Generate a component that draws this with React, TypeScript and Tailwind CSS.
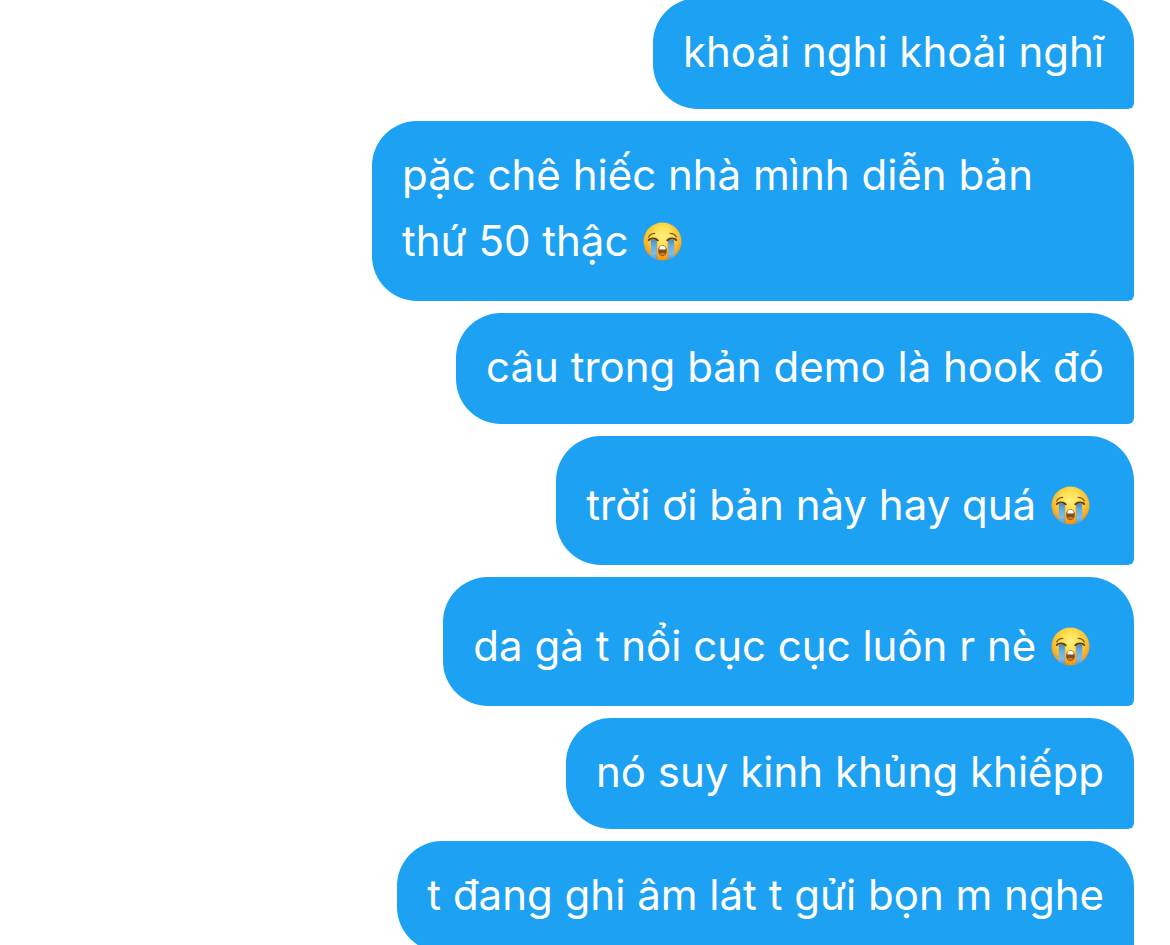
import { clsx } from 'clsx'

type Message = {
  id: number
  text: string
  crying?: boolean
  wide?: boolean
}

const MESSAGES: Message[] = [
  { id: 1, text: 'khoải nghi khoải nghĩ' },
  { id: 2, text: 'pặc chê hiếc nhà mình diễn bản thứ 50 thậc', crying: true, wide: true },
  { id: 3, text: 'câu trong bản demo là hook đó' },
  { id: 4, text: 'trời ơi bản này hay quá', crying: true },
  { id: 5, text: 'da gà t nổi cục cục luôn r nè', crying: true },
  { id: 6, text: 'nó suy kinh khủng khiếpp' },
  { id: 7, text: 't đang ghi âm lát t gửi bọn m nghe' },
]

function CryingFace() {
  return (
    <svg
      role="img"
      aria-label="😭"
      viewBox="0 0 40 40"
      className="ml-[3px] mr-[14px] inline-block h-[39px] w-[39px] align-[-5px]"
    >
      <defs>
        <radialGradient id="face" cx="0.5" cy="0.36" r="0.66">
          <stop offset="0" stopColor="#fff07a" />
          <stop offset="0.4" stopColor="#fddd50" />
          <stop offset="0.7" stopColor="#f9b92f" />
          <stop offset="1" stopColor="#e8890f" />
        </radialGradient>
        <linearGradient id="tear" x1="0" y1="0" x2="0" y2="1">
          <stop offset="0" stopColor="#4a8cc0" />
          <stop offset="0.3" stopColor="#62aee8" />
          <stop offset="0.65" stopColor="#7fbdea" />
          <stop offset="1" stopColor="#3d97e0" />
        </linearGradient>
        <clipPath id="head">
          <circle cx="20" cy="20" r="19.5" />
        </clipPath>
      </defs>
      <circle cx="20" cy="20" r="19.5" fill="url(#face)" />
      <g clipPath="url(#head)">
        <path d="M8 18h6.2v22H8zM25.8 18H32v22h-6.2z" fill="url(#tear)" />
        <path d="M14.4 19v20M25.6 19v20" stroke="#c98a2a" strokeWidth="0.5" />
      </g>
      <path
        d="M5.8 18.6c1.8-2.2 7-2.6 9.4.2M34.2 18.6c-1.8-2.2-7-2.6-9.4.2"
        fill="none"
        stroke="#5a3c14"
        strokeWidth="1.8"
        strokeLinecap="round"
      />
      <path
        d="M5.8 15.4c1.1-1.9 3.6-3.7 6.2-3.7M34.2 15.4c-1.1-1.9-3.6-3.7-6.2-3.7"
        fill="none"
        stroke="#80551b"
        strokeWidth="1.4"
        strokeLinecap="round"
      />
      <path d="M20 23.8c3 0 4.4 2.5 4.4 5.6S22.8 35 20 35s-4.4-2.5-4.4-5.6 1.4-5.6 4.4-5.6z" fill="#8a4a16" />
      <path d="M16.9 26.1c.6-1.4 1.8-1.8 3.1-1.8s2.5.4 3.1 1.8c.5 1.1.1 2.1-.9 2.1h-4.4c-1 0-1.4-1-.9-2.1z" fill="#fff" />
      <path d="M17 33c.8-1.9 5.2-1.9 6 0-.8 1-1.8 1.4-3 1.4s-2.2-.4-3-1.4z" fill="#c07a35" />
    </svg>
  )
}

function Bubble({ message }: { message: Message }) {
  return (
    <li
      className={clsx(
        'max-w-[762px] rounded-[45px] rounded-br-[6px] bg-[#1da1f2] px-[30px] text-[42px] leading-[66px] text-white',
        message.crying && !message.wide ? 'pt-9' : 'pt-[21px]',
        message.crying ? 'pb-[27px]' : 'pb-6',
      )}
    >
      {message.text}
      {message.crying && (
        <>
          {' '}
          <CryingFace />
        </>
      )}
    </li>
  )
}

export default function App() {
  return (
    <main className="h-screen overflow-hidden bg-white pr-9 font-['Inter','Noto_Sans',sans-serif]">
      <ul className="-mt-0.5 flex flex-col items-end gap-3">
        {MESSAGES.map((message) => (
          <Bubble key={message.id} message={message} />
        ))}
      </ul>
    </main>
  )
}
